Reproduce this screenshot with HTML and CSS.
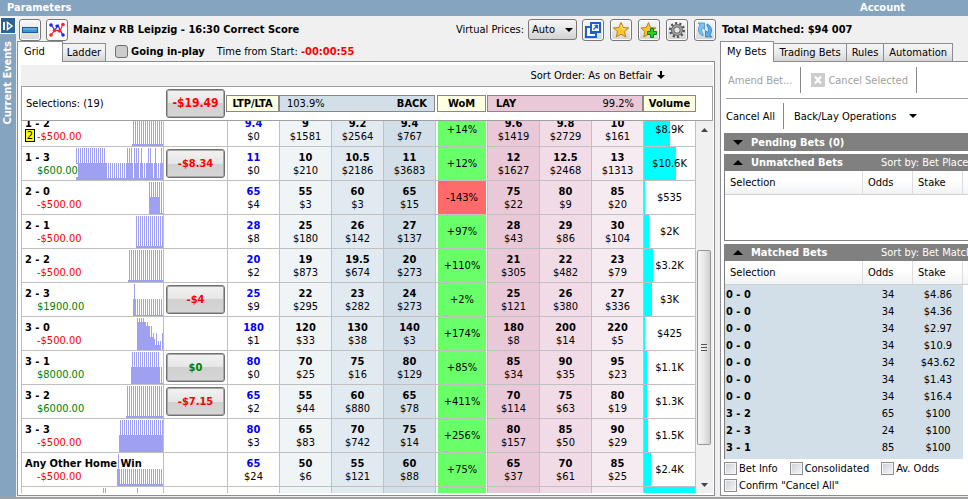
FILE: index.html
```
<!DOCTYPE html>
<html lang="en">

<head>
    <meta charset="UTF-8">
    <meta name="viewport" content="width=device-width, initial-scale=1.0">
    <title>Mainz v RB Leipzig - Correct Score</title>
    <link rel="stylesheet" href="styles.css">
</head>

<body>
    <header class="top-band">
        <span>Parameters</span>
        <span class="account">Account</span>
    </header>

    <div class="app">
        <aside class="side-band">
            <button class="expand" aria-label="Expand">
                <svg width="14" height="14" viewBox="0 0 14 14">
                    <path d="M2 3h2v8H2z" fill="#fff" />
                    <path d="M6.500 3.500v7l4.500-3.500z" fill="none" stroke="#fff" stroke-width="1.500" />
                </svg>
            </button>
            <span class="side-title">Current Events</span>
        </aside>

        <main class="market">
            <div class="market-bar">
                <button class="icon-btn" aria-label="Collapse">
                    <svg width="18" height="18" viewBox="0 0 18 18">
                        <rect x="1.500" y="6.500" width="15" height="5" fill="#3f95d2" stroke="#1c5c96" />
                        <path d="M2 8h14" stroke="#7cc0ea" />
                    </svg>
                </button>
                <button class="icon-btn chart" aria-label="Chart">
                    <svg width="18" height="18" viewBox="0 0 18 18">
                        <path d="M3 4l4 5 3-5 2 5 3 5" fill="none" stroke="#22f" stroke-width="1.200" />
                        <path d="M3 14l4-5 5 1 3-7" fill="none" stroke="#f22" stroke-width="1.200" />
                        <g fill="#22f">
                            <circle cx="3" cy="4" r="1.800" />
                            <circle cx="9" cy="5" r="1.600" />
                            <circle cx="15" cy="14" r="1.800" />
                        </g>
                        <g fill="#f22">
                            <circle cx="3" cy="14" r="1.800" />
                            <circle cx="6.500" cy="9.500" r="1.800" />
                            <circle cx="11.500" cy="10" r="1.800" />
                            <circle cx="15" cy="3.500" r="1.800" />
                        </g>
                    </svg>
                </button>
                <h1 class="market-name">Mainz v RB Leipzig - 16:30 Correct Score</h1>
                <label class="virtual" for="virtual">Virtual Prices:</label>
                <div class="select-box">
                    <select id="virtual">
                        <option>Auto</option>
                        <option>On</option>
                        <option>Off</option>
                    </select>
                    <svg class="caret" width="8" height="4" viewBox="0 0 8 4"><path d="M0 0h8L4 4z" /></svg>
                </div>
                <div class="tools">
                    <button class="icon-btn" aria-label="Open in window">
                        <svg width="18" height="18" viewBox="0 0 18 18">
                            <path d="M2 6h5v6h5v4H2z" fill="#fff" stroke="#1b62d0" stroke-width="2" />
                            <path d="M7 2h9v9H7z" fill="#fff" stroke="#1b62d0" stroke-width="2" />
                            <path d="M9.500 8.500l4-4M10.500 4.500h3v3" fill="none" stroke="#1b62d0" stroke-width="1.300" />
                        </svg>
                    </button>
                    <button class="icon-btn" aria-label="Favourite">
                        <svg width="18" height="18" viewBox="0 0 18 18">
                            <path d="M9 1.500l2.200 5 5.400.5-4.100 3.600 1.300 5.400L9 13.200 4.200 16l1.300-5.400L1.400 7l5.400-.5z" fill="#fcc62e" stroke="#b9801c" />
                            <path d="M9 4l1.200 3.500 3 .5" fill="none" stroke="#fff2a8" />
                        </svg>
                    </button>
                    <button class="icon-btn" aria-label="Add favourite">
                        <svg width="18" height="18" viewBox="0 0 18 18">
                            <path d="M8.500 1.500l2 5 5.400.5-4.100 3.600 1.300 5.400-4.600-2.800L3.700 16 5 10.600.9 7l5.400-.5z" fill="#fcc62e" stroke="#b9801c" />
                            <path d="M10.500 7.500h3v3h3v3h-3v3h-3v-3h-3v-3h3z" fill="#2fce2f" stroke="#12801a" />
                        </svg>
                    </button>
                    <button class="icon-btn" aria-label="Settings">
                        <svg width="18" height="18" viewBox="0 0 18 18">
                            <circle cx="9" cy="9" r="6.800" fill="none" stroke="#555" stroke-width="2.500" stroke-dasharray="2.140 2.130" />
                            <circle cx="9" cy="9" r="4.300" fill="none" stroke="#6c6c6c" stroke-width="3.500" />
                            <circle cx="9" cy="9" r="4.300" fill="none" stroke="#a4a4a4" stroke-width="1.500" />
                        </svg>
                    </button>
                    <button class="icon-btn" aria-label="Refresh">
                        <svg width="18" height="18" viewBox="0 0 18 18">
                            <path d="M2 2h6.500v6.500L6.500 6.500c-1.500 2-1 4.500.5 6.500v2C2.500 13 1 8.500 4 4z" fill="#7cc4f2" stroke="#3d8fc9" stroke-width=".8" />
                            <path d="M16 16H9.500V9.500l2 2c1.500-2 1-4.500-.5-6.500V3c4.500 2 6 6.500 3 11z" fill="#58aeea" stroke="#2a7ab8" stroke-width=".8" />
                        </svg>
                    </button>
                </div>
            </div>

            <div class="tab-row">
                <button class="tab active">Grid</button>
                <button class="tab">Ladder</button>
                <label class="in-play"><input type="checkbox" class="lamp">Going in-play</label>
                <span class="timer">Time from Start: <b>-00:00:55</b></span>
            </div>

            <section class="panel">
                <div class="sort-strip">
                    <span>Sort Order: As on Betfair</span>
                    <svg width="8" height="9" viewBox="0 0 8 9"><path d="M3 0h2v4h3L4 8 0 4h3z" /></svg>
                </div>
                <div class="grid-head">
                    <span class="selections">Selections: (19)</span>
                    <button class="pl-btn loss total">-$19.49</button>
                    <span class="head-cell cream">LTP/LTA</span>
                    <span class="head-cell back-head"><i>103.9%</i>BACK</span>
                    <span class="head-cell cream wom-head">WoM</span>
                    <span class="head-cell lay-head">LAY<i>99.2%</i></span>
                    <span class="head-cell cream">Volume</span>
                </div>
                <div class="grid-body">
                    <div class="grid-view">
                        <table class="prices">
                            <colgroup>
                                <col>
                                <col class="col-pl">
                                <col span="9" class="col-price">
                            </colgroup>
                            <tbody id="rows"></tbody>
                        </table>
                    </div>
                    <div class="scrollbar">
                        <svg class="arrow" width="7" height="4" viewBox="0 0 7 4"><path d="M0 4h7L3.500 0z" /></svg>
                        <div class="track-top"></div>
                        <div class="thumb"><span></span><span></span><span></span></div>
                        <div class="track-end"></div>
                        <svg class="arrow" width="7" height="4" viewBox="0 0 7 4"><path d="M0 0h7L3.500 4z" /></svg>
                    </div>
                </div>
            </section>
        </main>

        <section class="account-pane">
            <h2 class="matched-total">Total Matched: $94 007</h2>
            <div class="tab-row">
                <button class="tab active">My Bets</button>
                <button class="tab">Trading Bets</button>
                <button class="tab">Rules</button>
                <button class="tab">Automation</button>
            </div>
            <div class="bets-panel">
                <div class="action-row first">
                    <button class="action" disabled>Amend Bet...</button>
                    <button class="action with-icon" disabled>
                        <svg width="14" height="14" viewBox="0 0 14 14">
                            <path d="M0 0h14v14H0z" fill="#ccc" />
                            <path d="M4 3.500l6 7M10 3.500l-6 7" stroke="#fff" stroke-width="2" />
                        </svg>
                        Cancel Selected
                    </button>
                </div>
                <div class="action-row">
                    <button class="action">Cancel All</button>
                    <button class="action menu">Back/Lay Operations
                        <svg width="8" height="4" viewBox="0 0 8 4"><path d="M0 0h8L4 4z" /></svg>
                    </button>
                </div>

                <div class="section-bar pending">
                    <svg width="10" height="5" viewBox="0 0 10 5"><path d="M0 0h10L5 5z" /></svg>
                    <h3>Pending Bets (0)</h3>
                </div>

                <div class="section-bar">
                    <svg width="10" height="5" viewBox="0 0 10 5"><path d="M0 5h10L5 0z" /></svg>
                    <h3>Unmatched Bets</h3>
                    <span>Sort by: Bet Placed</span>
                </div>
                <div class="bet-box unmatched">
                    <table class="bets">
                        <thead>
                            <tr><th>Selection</th><th>Odds</th><th>Stake</th><th></th></tr>
                        </thead>
                    </table>
                </div>

                <div class="section-bar">
                    <svg width="10" height="5" viewBox="0 0 10 5"><path d="M0 5h10L5 0z" /></svg>
                    <h3>Matched Bets</h3>
                    <span>Sort by: Bet Matched</span>
                </div>
                <div class="bet-box matched">
                    <table class="bets">
                        <thead>
                            <tr><th>Selection</th><th>Odds</th><th>Stake</th><th></th></tr>
                        </thead>
                        <tbody>
                            <tr><td>0 - 0</td><td>34</td><td>$4.86</td></tr>
                            <tr><td>0 - 0</td><td>34</td><td>$4.36</td></tr>
                            <tr><td>0 - 0</td><td>34</td><td>$2.97</td></tr>
                            <tr><td>0 - 0</td><td>34</td><td>$10.9</td></tr>
                            <tr><td>0 - 0</td><td>34</td><td>$43.62</td></tr>
                            <tr><td>0 - 0</td><td>34</td><td>$1.43</td></tr>
                            <tr><td>0 - 0</td><td>34</td><td>$16.4</td></tr>
                            <tr><td>3 - 2</td><td>65</td><td>$100</td></tr>
                            <tr><td>2 - 3</td><td>24</td><td>$100</td></tr>
                            <tr><td>3 - 1</td><td>85</td><td>$100</td></tr>
                            <tr class="spare"><td></td><td></td><td></td></tr>
                        </tbody>
                    </table>
                </div>

                <div class="options">
                    <label><input type="checkbox">Bet Info</label>
                    <label><input type="checkbox">Consolidated</label>
                    <label><input type="checkbox">Av. Odds</label>
                    <label><input type="checkbox">Confirm "Cancel All"</label>
                </div>
            </div>
        </section>
    </div>
    <script src="script.js"></script>
</body>

</html>
```
FILE: styles.css
```
* {
    box-sizing: border-box;
}

body {
    margin: 0;
    height: 100vh;
    display: flex;
    flex-direction: column;
    overflow: hidden;
    background: #f0f0f0;
    border-bottom: 2px solid #a0a0a0;
    font-family: Tahoma, "DejaVu Sans Condensed", "DejaVu Sans", sans-serif;
    font-size: 11px;
    line-height: 13px;
    color: #000;
}

button,
select,
input {
    font: inherit;
    color: inherit;
    margin: 0;
}

h1,
h2,
h3 {
    margin: 0;
    font-size: 11px;
    line-height: 13px;
}

svg {
    display: block;
    flex: none;
}

.top-band {
    display: flex;
    justify-content: space-between;
    height: 16px;
    padding: 0 63px 0 7px;
    background: #84a4c0;
    color: #fff;
    font-size: 11px;
    line-height: 15px;
    font-weight: bold;
}

.app {
    flex: 1;
    min-height: 0;
    display: flex;
}

/* left strip */
.side-band {
    width: 16px;
    background: #84a4c0;
    border-top: 1px solid #f0f0f0;
    display: flex;
    flex-direction: column;
    align-items: center;
}

.expand {
    width: 16px;
    height: 17px;
    padding: 0;
    border: 1px solid #fff;
    background: #2a6496;
    display: flex;
    align-items: center;
    justify-content: center;
}

.side-title {
    margin-top: 7px;
    writing-mode: vertical-rl;
    transform: rotate(180deg);
    color: #fff;
    font-size: 11px;
    line-height: 14px;
    font-weight: bold;
    white-space: nowrap;
}

/* market */
.market {
    flex: 1;
    min-width: 0;
    display: flex;
    flex-direction: column;
    padding: 2px 5px 1px 1px;
}

.market-bar {
    display: flex;
    align-items: center;
    height: 23px;
    padding-left: 2px;
}

.icon-btn {
    width: 22px;
    height: 22px;
    padding: 0;
    border: 1px solid #777;
    border-radius: 3px;
    background: linear-gradient(#f8f8f8, #e8e8e8 50%, #d4d4d4);
    box-shadow: inset 0 0 0 1px #fff;
    display: flex;
    align-items: center;
    justify-content: center;
}

.chart {
    margin-left: 5px;
    background: #fff;
}

.market-name {
    flex: 1;
    margin-left: 5px;
    white-space: nowrap;
}

.virtual {
    margin-right: 4px;
}

.select-box {
    position: relative;
    width: 49px;
}

.select-box select {
    appearance: none;
    display: block;
    width: 100%;
    height: 21px;
    padding: 0 0 0 3px;
    border: 1px solid #777;
    border-radius: 3px;
    background: linear-gradient(#f6f6f6, #e6e6e6 50%, #d2d2d2);
}

.caret {
    position: absolute;
    right: 4px;
    top: 9px;
    pointer-events: none;
}

.tools {
    display: flex;
    gap: 6px;
    margin: 0 -1px 0 5px;
}

.tab-row {
    display: flex;
    align-items: flex-end;
    height: 20px;
    white-space: nowrap;
}

.tab {
    height: 18px;
    padding: 0 4px;
    border: 1px solid #8c8c94;
    border-bottom: 0;
    background: linear-gradient(#f4f4f4, #ececec 50%, #d6d6d6);
}

.tab + .tab {
    margin-left: -1px;
}

.tab.active {
    position: relative;
    z-index: 1;
    height: 21px;
    margin-bottom: -1px;
    padding: 0 17px 2px 6px;
    background: #fff;
}

.in-play {
    display: flex;
    align-items: center;
    align-self: center;
    gap: 3px;
    margin-left: 9px;
    font-weight: bold;
}

.lamp {
    appearance: none;
    width: 13px;
    height: 13px;
    border: 1px solid #707070;
    border-radius: 3px;
    background: #ccc;
}

.timer {
    align-self: center;
    margin-left: 12px;
}

.timer b,
.loss {
    color: #f00;
}

.gain {
    color: #008000;
}

.panel {
    flex: 1;
    min-height: 0;
    display: flex;
    flex-direction: column;
    padding: 3px 1px 2px 3px;
    border: 1px solid #8c8c94;
    background: #fff;
}

.sort-strip {
    display: flex;
    align-items: center;
    justify-content: flex-end;
    gap: 5px;
    height: 21px;
    padding-right: 48px;
    background: #f0f0f0;
}

.grid-head {
    display: grid;
    grid-template-columns: 1fr 62px 53px 156px 52px 156px 53px;
    align-items: center;
    height: 35px;
    padding-right: 16px;
    border: 1px solid #a0a0a0;
}

.selections {
    padding-left: 4px;
}

.pl-btn {
    display: block;
    width: 59px;
    height: 29px;
    margin: 0 0 0 2px;
    padding: 0;
    border: 1px solid #707070;
    border-radius: 3px;
    background: linear-gradient(#f2f2f2, #e6e6e6 50%, #d0d0d0 50%, #d6d6d6);
    box-shadow: inset 0 0 0 1px #a8a8a8;
    font-weight: bold;
}

.total {
    font-size: 12px;
}

.head-cell {
    display: flex;
    align-items: center;
    justify-content: space-between;
    height: 17px;
    border: 1px solid #888;
    font-weight: bold;
}

.head-cell i {
    font-style: normal;
    font-weight: normal;
}

.cream {
    justify-content: center;
    background: #ffffe1;
}

.back-head {
    padding: 0 7px;
    background: #d2dfe8;
}

.wom-head {
    margin: 0 1px 0 2px;
}

.lay-head {
    padding: 0 8px;
    background: #e9c9d8;
}

.grid-body {
    flex: 1;
    min-height: 0;
    display: flex;
    border-left: 1px solid #c0c0c0;
    border-right: 1px solid #f0f0f0;
}

.grid-view {
    flex: 1;
    overflow: hidden;
}

/* list is scrolled part of a row down */
.prices {
    width: 100%;
    margin-top: -8px;
    table-layout: fixed;
    border-collapse: separate;
    border-spacing: 0;
    text-align: center;
}

.col-pl {
    width: 64px;
}

.col-price {
    width: 52px;
}

.prices td {
    position: relative;
    height: 34px;
    padding: 0;
    border-right: 1px solid #c0c0c0;
    border-bottom: 1px solid #c0c0c0;
}

.prices b,
.prices span {
    display: block;
}

.prices .name {
    padding-left: 3px;
    text-align: left;
    white-space: nowrap;
}

.prices .name .amount {
    position: relative;
    z-index: 1;
    width: fit-content;
    margin-left: 12px;
    background: #fff;
}

.name .badge {
    position: absolute;
    left: 3px;
    bottom: 4px;
    width: 10px;
    border: 1px solid #000;
    background: #ff0;
    line-height: 11px;
    text-align: center;
}

.bars {
    position: absolute;
    right: 0;
    top: 0;
    stroke: #a0a0f0;
    shape-rendering: crispEdges;
}

.ltp b {
    color: #00f;
}

.back1 {
    background: #eff4f7;
}

.back2 {
    background: #e1eaf0;
}

.back3 {
    background: #d2dfe8;
}

.lay1 {
    background: #e9c9d8;
}

.lay2 {
    background: #f1dbe6;
}

.lay3 {
    background: #f7ebf2;
}

.wom span {
    height: 33px;
    margin: 0 1px 0 2px;
    background: #68ff68;
    line-height: 33px;
}

.wom .down {
    background: #ff6b6b;
}

.fill {
    position: absolute;
    left: 0;
    top: 0;
    height: 100%;
    background: #0ff;
}

.vol span {
    position: relative;
}

.scrollbar {
    width: 16px;
    padding: 7px 1px 6px;
    display: flex;
    flex-direction: column;
    align-items: center;
    background: #f0f0f0;
}

.arrow {
    fill: #444;
}

.track-top {
    flex: 119;
}

.track-end {
    flex: 38;
}

.thumb {
    flex: 194;
    width: 14px;
    display: flex;
    flex-direction: column;
    align-items: center;
    justify-content: center;
    gap: 2px;
    border: 1px solid #979797;
    border-radius: 2px;
    background: linear-gradient(90deg, #f6f6f6, #e8e8e8 50%, #cfcfcf);
}

.thumb span {
    width: 6px;
    height: 1px;
    background: #555;
}

/* account side */
.account-pane {
    width: 248px;
    display: flex;
    flex-direction: column;
    padding: 7px 0 1px;
    overflow: hidden;
    white-space: nowrap;
}

.matched-total {
    height: 18px;
    padding-left: 2px;
}

.account-pane .tab {
    padding: 0 5px;
}

.account-pane .tab.active {
    padding: 0 7px 2px 6px;
}

.bets-panel {
    flex: 1;
    min-height: 0;
    display: flex;
    flex-direction: column;
    padding-left: 3px;
    border: 1px solid #8c8c94;
    border-right: 0;
    background: #fff;
}

.action-row {
    display: flex;
    align-items: center;
    height: 34px;
}

.action-row.first {
    height: 37px;
    margin-left: 2px;
    border-bottom: 1px solid #a0a0a0;
}

.action {
    display: flex;
    align-items: center;
    height: 26px;
    padding: 0 8px 0 2px;
    border: 0;
    border-right: 1px solid #888;
    background: none;
}

.action:disabled {
    color: #a0a0a0;
}

.with-icon {
    gap: 3px;
    padding: 0 8px 0 10px;
}

.menu {
    gap: 13px;
    padding-left: 10px;
    border-right: 0;
}

.section-bar {
    display: flex;
    align-items: center;
    height: 17px;
    flex: none;
    padding-left: 9px;
    background: #808080;
    color: #fff;
}

.section-bar h3 {
    flex: none;
    width: 130px;
    margin-left: 8px;
}

.pending {
    height: 18px;
    margin-bottom: 3px;
}

.bet-box {
    overflow: hidden;
    border-left: 1px solid #808080;
}

.unmatched {
    height: 70px;
    flex: none;
    margin-bottom: 3px;
    border-bottom: 1px solid #808080;
}

.matched {
    flex: 1;
    min-height: 0;
}

.bets {
    width: 260px;
    table-layout: fixed;
    border-collapse: separate;
    border-spacing: 0;
}

.bets th {
    height: 24px;
    padding: 0 0 0 5px;
    border-right: 1px solid #ddd;
    border-bottom: 1px solid #d0d0d0;
    background: linear-gradient(#fff 40%, #f2f3f5);
    font-weight: normal;
    text-align: left;
}

.bets th:nth-child(1) {
    width: 138px;
}

.bets th:nth-child(2),
.bets th:nth-child(3) {
    width: 50px;
}

.bets td {
    height: 17px;
    padding: 1px 0 0;
    background: #d2dfe8;
    text-align: center;
}

.bets td:first-child {
    padding-left: 1px;
    font-weight: bold;
    text-align: left;
}

.options {
    display: flex;
    flex-wrap: wrap;
    gap: 4px 12px;
    padding: 3px 10px 3px 0;
}

.options label {
    display: flex;
    align-items: center;
    gap: 2px;
}

.options input {
    appearance: none;
    width: 13px;
    height: 13px;
    border: 1px solid #8e8f8f;
    background: linear-gradient(135deg, #cbcfd5, #f6f6f6);
    box-shadow: inset 0 0 0 1px #f4f4f4;
}
```
FILE: script.js
```
// bars: [from, to, top, step], step 1 is a solid block, step 2 is stripes
const rows = [
    { name: "1 - 2", pl: -500, badge: 2, bars: [[111, 141, 1, 2], [110, 141, 31, 1]],
      cells: ["9.4 0", "9 1581", "9.2 2564", "9.4 767", "9.6 1419", "9.8 2729", "10 161"], wom: "+14%", vol: "$8.9K", fill: 26 },
    { name: "1 - 3", pl: 600, bet: "-$8.34",
      bars: [[54, 83, 1, 2], [54, 84, 16, 1], [84, 141, 16, 2], [105, 110, 1, 2], [107, 111, 16, 1], [112, 117, 16, 1], [112, 117, 1, 2],
             [119, 120, 1, 2], [125, 130, 16, 1], [126, 129, 1, 2], [133, 134, 1, 2], [139, 140, 1, 2], [54, 141, 31, 1]],
      cells: ["11 0", "10 210", "10.5 2186", "11 3683", "12 1627", "12.5 2468", "13 1313"], wom: "+12%", vol: "$10.6K", fill: 32 },
    { name: "2 - 0", pl: -500, bars: [[127, 141, 1, 2], [127, 138, 16, 1], [127, 141, 32, 1]],
      cells: ["65 4", "55 3", "60 3", "65 15", "75 22", "80 9", "85 20"], wom: "-143%", vol: "$535", fill: 1 },
    { name: "2 - 1", pl: -500, bars: [[114, 141, 1, 2], [114, 141, 31, 1]],
      cells: ["28 8", "25 180", "26 142", "27 137", "28 43", "29 86", "30 104"], wom: "+97%", vol: "$2K", fill: 5 },
    { name: "2 - 2", pl: -500, bars: [[107, 141, 1, 2], [106, 141, 31, 1]],
      cells: ["20 2", "19 873", "19.5 674", "20 273", "21 305", "22 482", "23 79"], wom: "+110%", vol: "$3.2K", fill: 9 },
    { name: "2 - 3", pl: 1900, bet: "-$4", bars: [[112, 113, 1, 2], [111, 141, 16, 2], [111, 141, 32, 1]],
      cells: ["25 9", "22 295", "23 282", "24 273", "25 121", "26 380", "27 336"], wom: "+2%", vol: "$3K", fill: 8 },
    { name: "3 - 0", pl: -500,
      bars: [[115, 122, 1, 2], [115, 123, 5, 1], [123, 128, 9, 1], [123, 127, 5, 2], [128, 131, 20, 1], [129, 130, 9, 2], [131, 132, 16, 2],
             [132, 136, 22, 2], [134, 135, 16, 2], [133, 139, 28, 1], [136, 139, 24, 2], [140, 141, 16, 2]],
      cells: ["180 1", "120 33", "130 38", "140 3", "180 8", "200 14", "220 5"], wom: "+174%", vol: "$425", fill: 1 },
    { name: "3 - 1", pl: 8000, bet: "$0", bars: [[110, 138, 1, 2], [109, 138, 16, 1], [139, 140, 16, 2], [109, 141, 32, 1]],
      cells: ["80 0", "70 25", "75 16", "80 129", "85 34", "90 35", "95 23"], wom: "+85%", vol: "$1.1K", fill: 3 },
    { name: "3 - 2", pl: 6000, bet: "-$7.15", bars: [[105, 141, 1, 2], [104, 141, 31, 1]],
      cells: ["65 2", "55 44", "60 880", "65 78", "70 114", "75 63", "80 19"], wom: "+411%", vol: "$1.3K", fill: 3 },
    { name: "3 - 3", pl: -500, bars: [[98, 141, 1, 2], [97, 141, 16, 1]],
      cells: ["80 3", "65 83", "70 742", "75 14", "80 157", "85 50", "90 29"], wom: "+256%", vol: "$1.5K", fill: 4 },
    { name: "Any Other Home Win", pl: -500, bars: [[96, 97, 1, 2], [95, 141, 16, 2], [95, 141, 31, 1]],
      cells: ["65 24", "50 6", "55 121", "60 88", "65 37", "70 61", "85 25"], wom: "+75%", vol: "$2.4K", fill: 7 },
    { name: "Any Other Away Win", pl: -500, bars: [[81, 84, 1, 2], [115, 116, 1, 2]],
      cells: ["1.5 24", "1.5 6", "1.6 121", "1.6 88", "1.7 37", "1.8 61", "1.7 25"], wom: "+75%", vol: "$17K", fill: 51 }
];

const classes = ["ltp", "back1", "back2", "back3", "lay1", "lay2", "lay3"];

function drawBars(bars) {
    let d = "";
    bars.forEach(([from, to, top, step]) => {
        for (let x = from; x < to; x += step) {
            d += `M${x + 0.5} 33V${top}`;
        }
    });
    return `<svg class="bars" width="141" height="33" viewBox="0 0 141 33"><path d="${d}"/></svg>`;
}

function priceCell(text, i) {
    const [odds, amount] = text.split(" ");
    return `<td class="${classes[i]}"><b>${odds}</b>$${amount}</td>`;
}

document.getElementById("rows").innerHTML = rows.map(row => {
    const color = row.pl < 0 ? "loss" : "gain";
    const pl = (row.pl < 0 ? "-$" : "$") + Math.abs(row.pl).toFixed(2);
    const badge = row.badge ? `<span class="badge">${row.badge}</span>` : "";
    const bet = row.bet ? `<button class="pl-btn ${row.bet[0] === "-" ? "loss" : "gain"}">${row.bet}</button>` : "";
    const cells = row.cells.map(priceCell);
    return `<tr>
        <td class="name"><b>${row.name}</b><span class="amount ${color}">${pl}</span>${badge}${drawBars(row.bars)}</td>
        <td>${bet}</td>
        ${cells.slice(0, 4).join("")}
        <td class="wom"><span class="${row.wom[0] === "-" ? "down" : ""}">${row.wom}</span></td>
        ${cells.slice(4).join("")}
        <td class="vol"><div class="fill" style="width:${row.fill}px"></div><span>${row.vol}</span></td>
    </tr>`;
}).join("");
```
